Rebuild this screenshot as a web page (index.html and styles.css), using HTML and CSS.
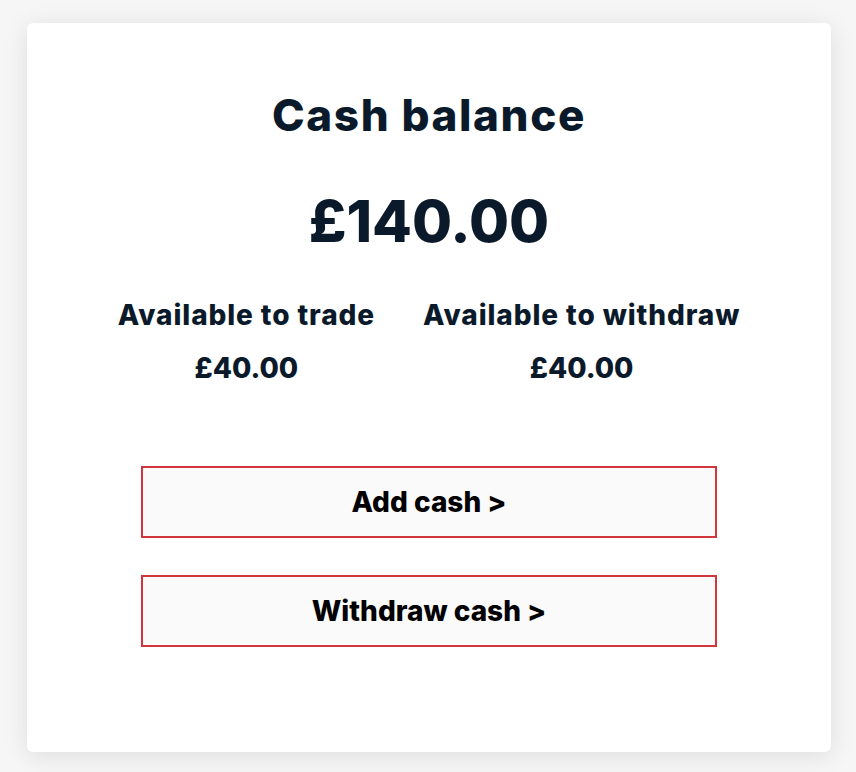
FILE: index.html
```html
<!DOCTYPE html>
<html lang="en">
<head>
    <meta charset="UTF-8">
    <meta name="viewport" content="width=device-width, initial-scale=1.0">
    <title>Cash balance</title>
    <link rel="stylesheet" href="styles.css">
</head>
<body>

    <div class="balance-card">
        <h2 class="balance-title">Cash balance</h2>
        <div class="balance-total">£140.00</div>

        <div class="balance-split">
            <div class="split-item">
                <div class="split-label">Available to trade</div>
                <div class="split-value">£40.00</div>
            </div>
            <div class="split-item">
                <div class="split-label">Available to withdraw</div>
                <div class="split-value">£40.00</div>
            </div>
        </div>

        <div class="balance-actions">
            <button type="button" class="action-button">Add cash &gt;</button>
            <button type="button" class="action-button">Withdraw cash &gt;</button>
        </div>
    </div>

</body>
</html>
```

FILE: styles.css
```css
body {
    margin: 0;
    padding: 23px 25px 20px 27px;
    background: #f6f6f6;
    font-family: Inter, "Open Sans", sans-serif;
    color: #0b1a2b;
}

.balance-card {
    height: 729px;
    box-sizing: border-box;
    background: #fff;
    border-radius: 6px;
    box-shadow: 0 4px 24px rgba(0, 0, 0, 0.1);
    text-align: center;
    padding-top: 66px;
}

.balance-title {
    margin: 0;
    font-size: 44px;
    font-weight: 800;
    line-height: 52px;
    letter-spacing: 1.6px;
}

.balance-total {
    margin-top: 48px;
    font-size: 58px;
    font-weight: 800;
    line-height: 64px;
}

.balance-split {
    display: flex;
    justify-content: center;
    gap: 48px;
    margin-top: 46px;
}

.split-label {
    font-size: 28px;
    font-weight: 800;
    line-height: 32px;
    letter-spacing: 0.9px;
}

.split-value {
    margin-top: 20px;
    font-size: 28px;
    font-weight: 800;
    line-height: 34px;
}

.balance-actions {
    display: flex;
    flex-direction: column;
    align-items: center;
    gap: 37px;
    margin-top: 81px;
}

.action-button {
    width: 576px;
    height: 72px;
    background: #fafafa;
    border: 2px solid #d2363c;
    font-family: inherit;
    font-size: 28px;
    font-weight: 800;
    color: #000;
    cursor: pointer;
}
```
